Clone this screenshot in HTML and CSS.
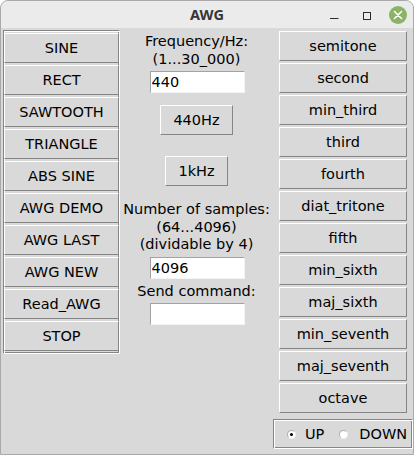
FILE: index.html
```html
<!DOCTYPE html>
<html>
<head>
<meta charset="utf-8">
<link rel="stylesheet" href="styles.css">
</head>
<body>
<div class="window">
  <div class="titlebar">
    <div class="spacer"></div>
    <div class="title">AWG</div>
    <div class="controls">
      <svg class="ic-min" width="10" height="27" viewBox="0 0 10 27"><path d="M1 17.5 H9.5" stroke="#2e2e2e" stroke-width="1"/></svg>
      <svg class="ic-max" width="9" height="27" viewBox="0 0 9 27"><rect x="0.5" y="11.5" width="7" height="7" fill="none" stroke="#2e2e2e" stroke-width="1"/></svg>
      <svg class="ic-close" width="18" height="27" viewBox="0 0 18 27"><circle cx="9" cy="14" r="9" fill="#8bb365"/><path d="M5.5 10.5 L12.5 17.5 M12.5 10.5 L5.5 17.5" stroke="#fff" stroke-width="1.6" stroke-linecap="round"/></svg>
    </div>
  </div>
  <div class="content">
    <div class="left-frame">
      <button class="btn">SINE</button>
      <button class="btn">RECT</button>
      <button class="btn">SAWTOOTH</button>
      <button class="btn">TRIANGLE</button>
      <button class="btn">ABS SINE</button>
      <button class="btn">AWG DEMO</button>
      <button class="btn">AWG LAST</button>
      <button class="btn">AWG NEW</button>
      <button class="btn">Read_AWG</button>
      <button class="btn">STOP</button>
    </div>
    <div class="middle">
      <div class="label">Frequency/Hz:<br>(1...30_000)</div>
      <div class="entry e-freq">440</div>
      <button class="btn btn-440">440Hz</button>
      <button class="btn btn-1k">1kHz</button>
      <div class="label l-samples">Number of samples:<br>(64...4096)<br>(dividable by 4)</div>
      <div class="entry e-samples">4096</div>
      <div class="label l-send">Send command:</div>
      <div class="entry e-send"></div>
    </div>
    <div class="right">
      <button class="btn btn-int">semitone</button>
      <button class="btn btn-int">second</button>
      <button class="btn btn-int">min_third</button>
      <button class="btn btn-int">third</button>
      <button class="btn btn-int">fourth</button>
      <button class="btn btn-int">diat_tritone</button>
      <button class="btn btn-int">fifth</button>
      <button class="btn btn-int">min_sixth</button>
      <button class="btn btn-int">maj_sixth</button>
      <button class="btn btn-int">min_seventh</button>
      <button class="btn btn-int">maj_seventh</button>
      <button class="btn btn-int">octave</button>
      <div class="radio-frame">
        <label class="radio"><span class="ind on"></span>UP</label>
        <label class="radio r-down"><span class="ind"></span>DOWN</label>
      </div>
    </div>
  </div>
</div>
</body>
</html>
```
FILE: styles.css
```css
* { box-sizing: border-box; }
html, body { margin: 0; padding: 0; background: #ffffff; }
body {
  font-family: "DejaVu Sans", sans-serif;
  font-size: 14.5px;
  color: #000;
}
.window {
  width: 414px;
  height: 455px;
  background: #d9d9d9;
  border: 1px solid #a9a9a9;
  border-radius: 8px 8px 0 0;
  overflow: hidden;
  display: flex;
  flex-direction: column;
}
.titlebar {
  height: 27px;
  flex: none;
  background: #ebebeb;
  display: grid;
  grid-template-columns: 1fr auto 1fr;
  align-items: center;
}
.title {
  font-family: "Noto Sans", sans-serif;
  font-weight: 700;
  font-size: 14.5px;
  color: #363636;
  line-height: 27px;
}
.controls {
  justify-self: end;
  align-self: stretch;
  display: flex;
  padding-right: 6px;
}
.controls svg { display: block; }
.ic-max { margin-left: 24px; }
.ic-close { margin-left: 17px; }

.content {
  display: flex;
  align-items: flex-start;
  padding-left: 2px;
}
.btn {
  font: inherit;
  color: #000;
  background: #d9d9d9;
  border: 1px solid;
  border-color: #ffffff #858585 #858585 #ffffff;
  border-radius: 0;
  height: 30px;
  margin: 0;
  padding: 0;
  line-height: 17px;
  text-align: center;
  flex: none;
}
.left-frame {
  width: 117px;
  margin-top: 2px;
  padding: 2px 0;
  border: 1px solid;
  border-color: #858585 #ffffff #ffffff #858585;
  box-shadow: inset 1px 1px 0 #ffffff, inset -1px -1px 0 #858585;
  display: flex;
  flex-direction: column;
  gap: 2px;
}
.left-frame .btn { width: 100%; }

.middle {
  width: 153px;
  padding-top: 5px;
  display: flex;
  flex-direction: column;
  align-items: center;
}
.label {
  line-height: 17.5px;
  text-align: center;
  white-space: nowrap;
}
.entry {
  width: 95px;
  height: 22px;
  background: #ffffff;
  border: 1px solid;
  border-color: #a3a3a3 #f4f4f4 #f4f4f4 #a3a3a3;
  padding-left: 1px;
  line-height: 20px;
  margin-left: 1px;
}
.e-freq { margin-top: 3px; }
.btn-440 { width: 73px; margin-top: 12px; }
.btn-1k { width: 63px; margin-top: 21px; }
.l-samples { margin-top: 15px; }
.e-samples { margin-top: 3px; }
.l-send { margin-top: 4px; }
.e-send { margin-top: 3px; }

.right {
  width: 140px;
  padding-top: 3px;
  display: flex;
  flex-direction: column;
  align-items: center;
  gap: 2px;
}
.btn-int { width: 128px; }
.radio-frame {
  width: 140px;
  height: 30px;
  margin-top: 4px;
  border: 1px solid;
  border-color: #858585 #ffffff #ffffff #858585;
  box-shadow: inset 1px 1px 0 #ffffff, inset -1px -1px 0 #858585;
  display: flex;
  align-items: center;
  padding-left: 13px;
}
.radio {
  display: flex;
  align-items: center;
  line-height: 17px;
}
.r-down { margin-left: 15px; }
.ind {
  width: 9px;
  height: 9px;
  border-radius: 50%;
  background: #ffffff;
  border: 1px solid;
  border-color: #b0b0b0 #f0f0f0 #f0f0f0 #b0b0b0;
  margin-right: 9px;
  display: flex;
  align-items: center;
  justify-content: center;
}
.r-down .ind { margin-right: 11px; }
.ind.on::after {
  content: "";
  width: 3px;
  height: 3px;
  border-radius: 50%;
  background: #000;
}
```
